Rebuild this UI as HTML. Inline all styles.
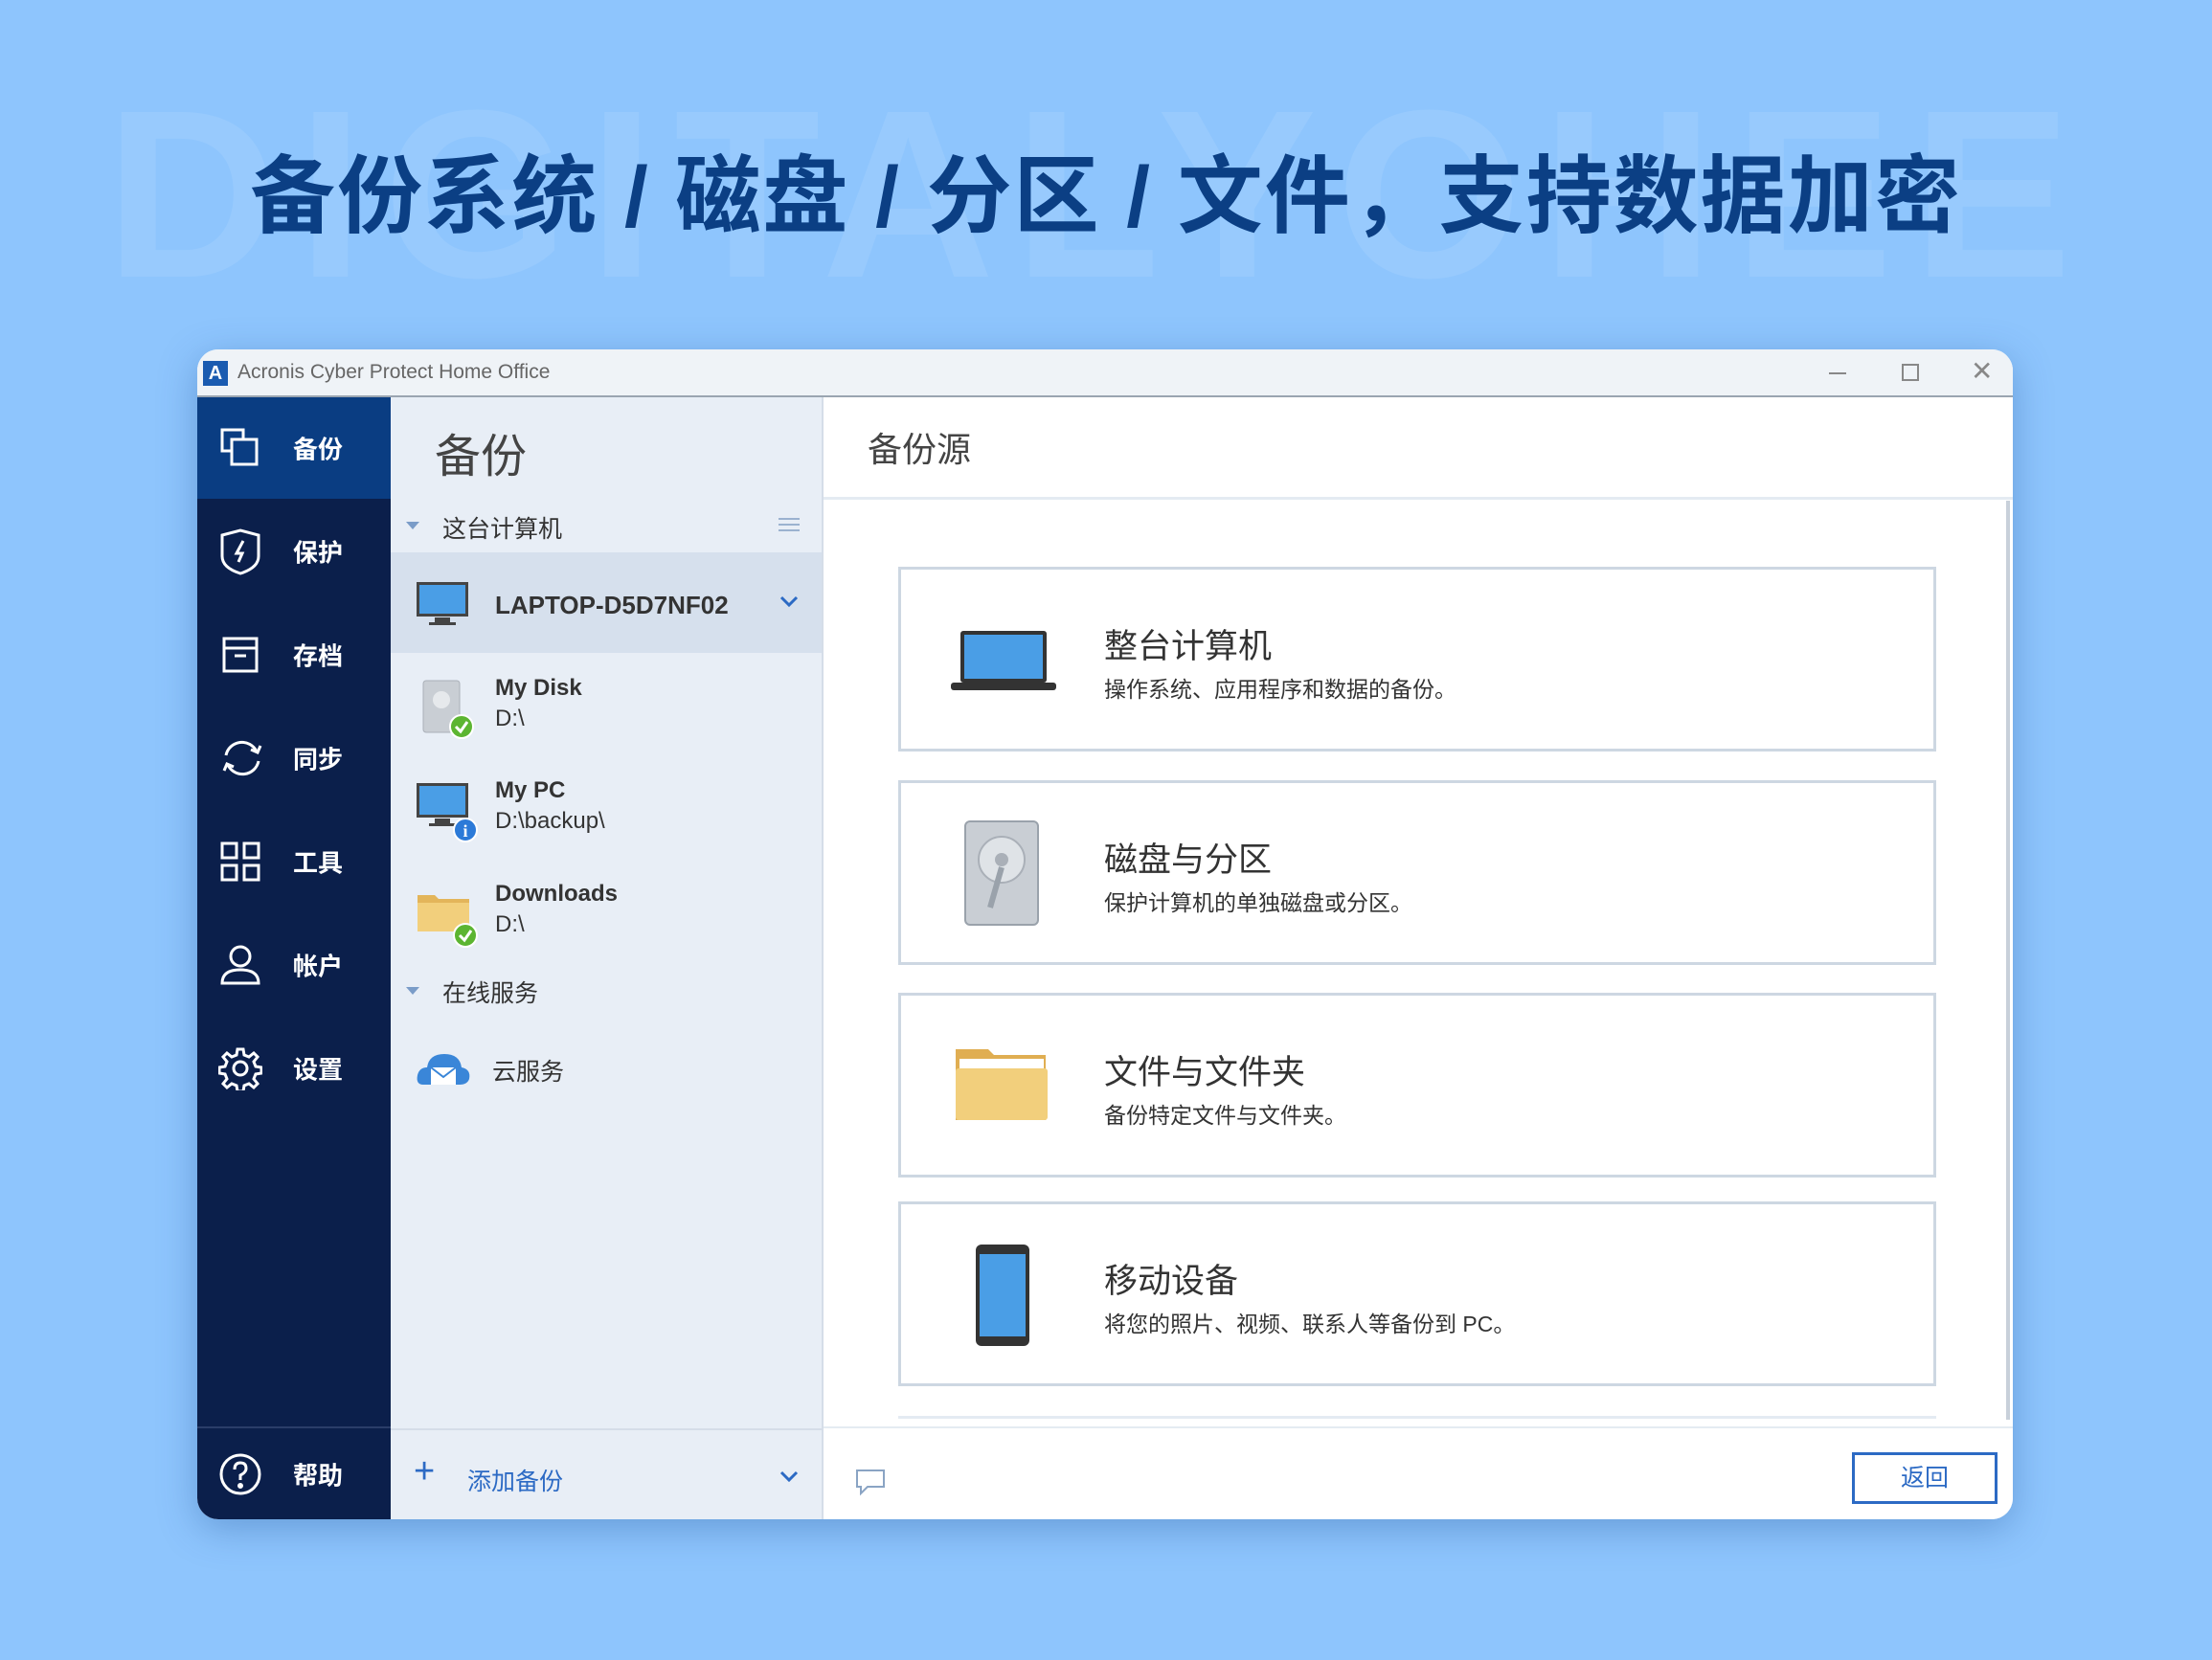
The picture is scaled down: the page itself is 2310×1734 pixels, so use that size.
<!DOCTYPE html>
<html><head><meta charset="utf-8"><style>
*{margin:0;padding:0;box-sizing:border-box}
body{width:2310px;height:1734px;background:#8ec5fd;position:relative;overflow:hidden;font-family:"Liberation Sans","Noto Sans CJK SC",sans-serif}
.a{position:absolute}
.wm{left:110px;top:78px;font-size:250px;font-weight:bold;color:#98cafd;letter-spacing:20px;white-space:nowrap;line-height:1}
.h1{left:0;width:2310px;top:133px;text-align:center;font-size:89px;font-weight:bold;color:#0b3f84;white-space:nowrap;letter-spacing:2px}
.win{left:206px;top:365px;width:1896px;height:1222px;background:#fff;border-radius:22px;overflow:hidden;box-shadow:0 10px 40px rgba(30,80,150,.35)}
.tb{left:0;top:0;width:1896px;height:50px;background:#eff3f7;border-bottom:2px solid #9aa5b1}
.side{left:0;top:50px;width:202px;height:1172px;background:#0b1f4b}
.si{left:0;width:202px;height:106px;color:#fff;font-size:26px;font-weight:bold}
.si span{position:absolute;left:100px;top:50%;transform:translateY(-50%)}
.si svg{position:absolute;left:22px;top:50%;transform:translateY(-50%)}
.mid{left:202px;top:50px;width:452px;height:1172px;background:#e8eef6;border-right:2px solid #d5dde8}
.right{left:654px;top:50px;width:1242px;height:1172px;background:#fff}
.card{left:78px;width:1084px;height:193px;border:3px solid #cdd7e2;background:#fff}
.ct{left:212px;top:52px;font-size:35px;color:#333}
.cd{left:212px;top:106px;font-size:23px;color:#333}
.txt{color:#333}
</style></head><body>
<div class="a wm">DIGITALYOHEE</div>
<div class="a h1">备份系统 / 磁盘 / 分区 / 文件，支持数据加密</div>
<div class="a win">
 <div class="a tb">
  <div class="a" style="left:6px;top:12px;width:26px;height:26px;background:#1a5bb0;color:#fff;font-weight:bold;font-size:20px;text-align:center;line-height:26px">A</div>
  <div class="a" style="left:42px;top:12px;font-size:21px;color:#666">Acronis Cyber Protect Home Office</div>
  <div class="a" style="left:1704px;top:24px;width:18px;height:2px;background:#888"></div>
  <div class="a" style="left:1780px;top:15px;width:18px;height:18px;border:2px solid #888"></div>
  <div class="a" style="left:1852px;top:6px;font-size:28px;color:#888">✕</div>
 </div>
 <div class="a side">
  <div class="a si" style="top:0;background:#0a3d82"><svg width="46" height="46" viewBox="0 0 46 46" fill="none" stroke="#fff" stroke-width="3"><rect x="4" y="4" width="22" height="22"/><rect x="14" y="14" width="26" height="26" fill="#0a3d82"/></svg><span>备份</span></div>
  <div class="a si" style="top:108px"><svg width="46" height="50" viewBox="0 0 46 50" fill="none" stroke="#fff" stroke-width="3"><path d="M4 8 L23 3 L42 8 V30 Q42 42 23 48 Q4 42 4 30Z"/><path d="M26 14 L19 27 H25 L21 36" /></svg><span>保护</span></div>
  <div class="a si" style="top:216px"><svg width="46" height="46" viewBox="0 0 46 46" fill="none" stroke="#fff" stroke-width="3"><rect x="6" y="6" width="34" height="34"/><path d="M6 16 H40 M17 24 H29"/></svg><span>存档</span></div>
  <div class="a si" style="top:324px"><svg width="50" height="46" viewBox="0 0 50 46" fill="none" stroke="#fff" stroke-width="3"><path d="M8 20 A17 17 0 0 1 40 16 M42 26 A17 17 0 0 1 10 30"/><path d="M34 14 L41 17 L44 10 M16 32 L9 29 L6 36"/></svg><span>同步</span></div>
  <div class="a si" style="top:432px"><svg width="46" height="46" viewBox="0 0 46 46" fill="none" stroke="#fff" stroke-width="3"><rect x="4" y="4" width="15" height="15"/><rect x="27" y="4" width="15" height="15"/><rect x="4" y="27" width="15" height="15"/><rect x="27" y="27" width="15" height="15"/></svg><span>工具</span></div>
  <div class="a si" style="top:540px"><svg width="46" height="46" viewBox="0 0 46 46" fill="none" stroke="#fff" stroke-width="3"><circle cx="23" cy="14" r="10"/><path d="M4 42 Q4 28 23 28 Q42 28 42 42 Z"/></svg><span>帐户</span></div>
  <div class="a si" style="top:648px"><svg width="46" height="46" viewBox="0 0 46 46" fill="none" stroke="#fff" stroke-width="3"><circle cx="23" cy="23" r="7"/><path d="M20 3h6l1 6 5 2 5-4 4 4-4 5 2 5 6 1v6l-6 1-2 5 4 5-4 4-5-4-5 2-1 6h-6l-1-6-5-2-5 4-4-4 4-5-2-5-6-1v-6l6-1 2-5-4-5 4-4 5 4 5-2z"/></svg><span>设置</span></div>
  <div class="a" style="left:0;top:1075px;width:202px;height:2px;background:#2a3d68"></div>
  <div class="a si" style="top:1077px;height:95px"><svg width="46" height="46" viewBox="0 0 46 46" fill="none" stroke="#fff" stroke-width="3"><circle cx="23" cy="23" r="20"/><path d="M17 18 Q17 11 23 11 Q29 11 29 17 Q29 21 23 24 V29"/><circle cx="23" cy="35" r="1.5" fill="#fff"/></svg><span>帮助</span></div>
 </div>
 <div class="a mid">
  <div class="a txt" style="left:46px;top:22px;font-size:48px;color:#444">备份</div>
  <div class="a" style="left:16px;top:130px;border:7px solid transparent;border-top:8px solid #7a9cc8"></div>
  <div class="a txt" style="left:54px;top:118px;font-size:25px">这台计算机</div>
  <div class="a" style="left:405px;top:126px;width:22px;height:14px;border-top:2px solid #9bb2d0;border-bottom:2px solid #9bb2d0"></div>
  <div class="a" style="left:405px;top:132px;width:22px;height:2px;background:#9bb2d0"></div>
  <div class="a" style="left:0;top:162px;width:450px;height:105px;background:#d6e0ed"></div>
  <svg class="a" style="left:26px;top:192px" width="56" height="48" viewBox="0 0 56 48"><rect x="1" y="1" width="54" height="36" fill="#444"/><rect x="4" y="4" width="48" height="30" fill="#4a9ee6"/><rect x="20" y="38" width="16" height="5" fill="#444"/><rect x="14" y="43" width="28" height="3" fill="#444"/></svg>
  <div class="a" style="left:109px;top:202px;font-size:26px;font-weight:bold;color:#333">LAPTOP-D5D7NF02</div>
  <svg class="a" style="left:405px;top:206px" width="22" height="14"><path d="M3 3 L11 11 L19 3" stroke="#2c6ac4" stroke-width="3" fill="none"/></svg>
  <svg class="a" style="left:32px;top:294px" width="56" height="66" viewBox="0 0 56 66"><rect x="2" y="2" width="38" height="54" rx="3" fill="#c9ced4" stroke="#aab0b8"/><circle cx="21" cy="22" r="9" fill="#e6e9ec"/><circle cx="42" cy="50" r="12" fill="#5cb531" stroke="#fff" stroke-width="2"/><path d="M36 50 L41 55 L48 45" stroke="#fff" stroke-width="3" fill="none"/></svg>
  <div class="a" style="left:109px;top:290px;font-size:24px;font-weight:bold;color:#333">My Disk</div>
  <div class="a txt" style="left:109px;top:322px;font-size:24px">D:\</div>
  <svg class="a" style="left:26px;top:402px" width="66" height="64" viewBox="0 0 66 64"><rect x="1" y="1" width="54" height="36" fill="#444"/><rect x="4" y="4" width="48" height="30" fill="#4a9ee6"/><rect x="20" y="38" width="16" height="5" fill="#444"/><rect x="14" y="43" width="28" height="3" fill="#444"/><circle cx="52" cy="50" r="12" fill="#2c7ad8" stroke="#fff" stroke-width="2"/><text x="52" y="57" font-size="18" font-weight="bold" fill="#fff" text-anchor="middle" font-family="Liberation Serif">i</text></svg>
  <div class="a" style="left:109px;top:397px;font-size:24px;font-weight:bold;color:#333">My PC</div>
  <div class="a txt" style="left:109px;top:429px;font-size:24px">D:\backup\</div>
  <svg class="a" style="left:26px;top:512px" width="66" height="64" viewBox="0 0 66 64"><path d="M2 8 H20 L24 12 H56 V46 H2Z" fill="#e3b55a"/><rect x="2" y="16" width="54" height="30" fill="#f2cf7c"/><circle cx="52" cy="50" r="12" fill="#5cb531" stroke="#fff" stroke-width="2"/><path d="M46 50 L51 55 L58 45" stroke="#fff" stroke-width="3" fill="none"/></svg>
  <div class="a" style="left:109px;top:505px;font-size:24px;font-weight:bold;color:#333">Downloads</div>
  <div class="a txt" style="left:109px;top:537px;font-size:24px">D:\</div>
  <div class="a" style="left:16px;top:616px;border:7px solid transparent;border-top:8px solid #7a9cc8"></div>
  <div class="a txt" style="left:54px;top:603px;font-size:25px">在线服务</div>
  <svg class="a" style="left:26px;top:680px" width="58" height="42" viewBox="0 0 58 42"><path d="M8 38 Q0 38 2 28 Q4 20 12 20 Q14 6 30 6 Q46 6 48 20 Q58 22 56 32 Q54 38 46 38Z" fill="#3a86d8"/><rect x="16" y="20" width="26" height="18" fill="#fff"/><path d="M16 20 L29 30 L42 20" stroke="#3a86d8" stroke-width="2" fill="none"/></svg>
  <div class="a txt" style="left:106px;top:685px;font-size:25px">云服务</div>
  <div class="a" style="left:0;top:1077px;width:450px;height:2px;background:#d5dde8"></div>
  <div class="a" style="left:24px;top:1103px;font-size:38px;color:#2c6ac4;line-height:1">+</div>
  <div class="a" style="left:80px;top:1113px;font-size:25px;color:#2c6ac4">添加备份</div>
  <svg class="a" style="left:405px;top:1120px" width="22" height="14"><path d="M3 3 L11 11 L19 3" stroke="#2c6ac4" stroke-width="3" fill="none"/></svg>
 </div>
 <div class="a right">
  <div class="a txt" style="left:46px;top:26px;font-size:36px;color:#444">备份源</div>
  <div class="a" style="left:0;top:104px;width:1242px;height:3px;background:#e4ebf2"></div>
  <div class="a" style="left:1235px;top:108px;width:4px;height:960px;background:#c8d0da"></div>
  <div class="a card" style="top:177px"><svg class="a" style="left:52px;top:62px" width="110" height="66" viewBox="0 0 110 66"><rect x="10" y="2" width="90" height="54" rx="3" fill="#333"/><rect x="14" y="6" width="82" height="46" fill="#4a9ee6"/><rect x="0" y="56" width="110" height="8" rx="3" fill="#333"/></svg><div class="a ct">整台计算机</div><div class="a cd">操作系统、应用程序和数据的备份。</div></div>
  <div class="a card" style="top:400px"><svg class="a" style="left:65px;top:38px" width="80" height="112" viewBox="0 0 80 112"><rect x="2" y="2" width="76" height="108" rx="5" fill="#c9ced4" stroke="#9aa2ab" stroke-width="2"/><circle cx="40" cy="42" r="24" fill="#dfe3e7" stroke="#aab0b8" stroke-width="2"/><circle cx="40" cy="42" r="7" fill="#aab0b8"/><path d="M40 50 L28 92" stroke="#9aa2ab" stroke-width="6"/></svg><div class="a ct">磁盘与分区</div><div class="a cd">保护计算机的单独磁盘或分区。</div></div>
  <div class="a card" style="top:622px"><svg class="a" style="left:55px;top:52px" width="100" height="80" viewBox="0 0 100 80"><path d="M2 4 H36 L42 10 H96 V78 H2Z" fill="#e0ae52"/><rect x="6" y="14" width="88" height="10" fill="#fff"/><rect x="2" y="24" width="96" height="54" rx="3" fill="#f2cf7c"/></svg><div class="a ct">文件与文件夹</div><div class="a cd">备份特定文件与文件夹。</div></div>
  <div class="a card" style="top:840px"><svg class="a" style="left:76px;top:40px" width="60" height="110" viewBox="0 0 60 110"><rect x="2" y="2" width="56" height="106" rx="6" fill="#333"/><rect x="6" y="12" width="48" height="86" fill="#4a9ee6"/></svg><div class="a ct">移动设备</div><div class="a cd">将您的照片、视频、联系人等备份到 PC。</div></div>
  <div class="a" style="left:78px;top:1064px;width:1084px;height:3px;background:#e4ebf2"></div>
  <div class="a" style="left:0;top:1075px;width:1242px;height:2px;background:#e4ebf2"></div>
  <svg class="a" style="left:32px;top:1118px" width="34" height="30" viewBox="0 0 34 30"><path d="M3 3 H31 V20 H14 L7 27 V20 H3Z" fill="none" stroke="#8aa4c4" stroke-width="2"/></svg>
  <div class="a" style="left:1074px;top:1102px;width:152px;height:54px;border:3px solid #2c6ac4;color:#2c6ac4;font-size:25px;text-align:center;line-height:48px">返回</div>
 </div>
</div>
</body></html>
